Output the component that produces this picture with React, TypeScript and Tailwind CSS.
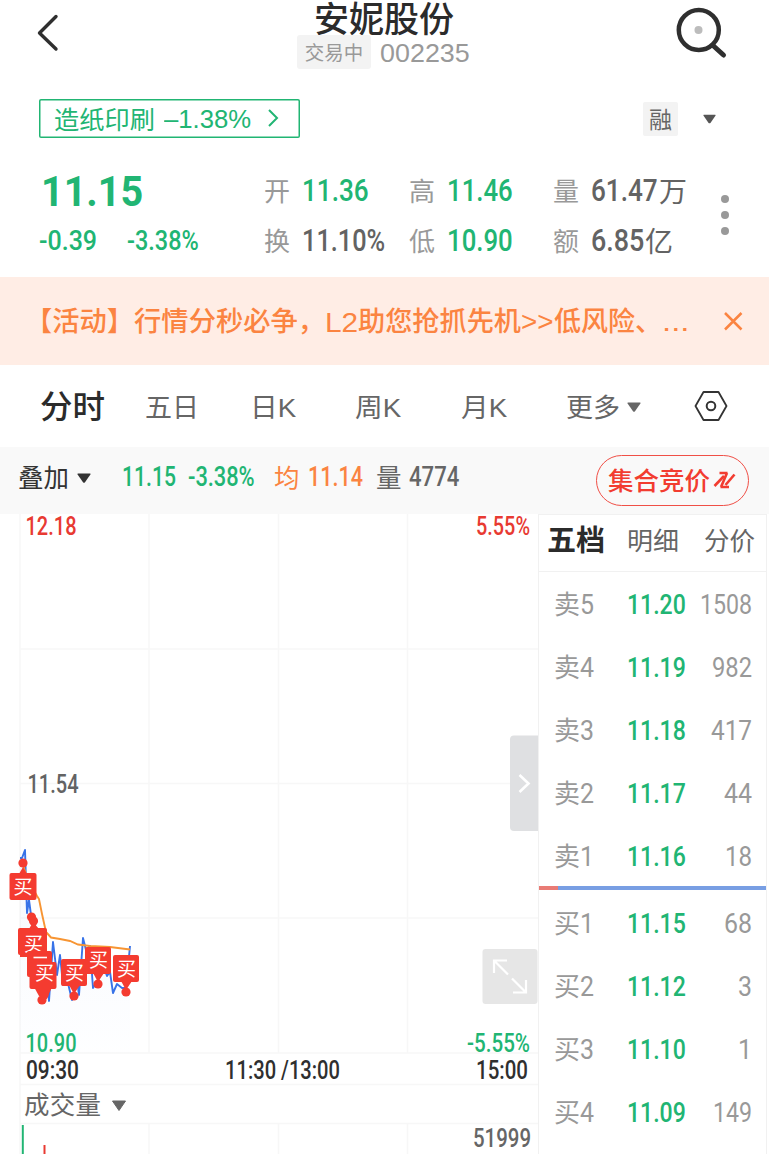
import { useLayoutEffect, useRef, useState } from "react";
import type { ReactNode } from "react";

const CJK = "font-['Noto_Sans_CJK_SC',sans-serif]";
const NUM = "font-['Roboto','Noto_Sans_CJK_SC',sans-serif]";
const SANS = "font-['Liberation_Sans','Noto_Sans_CJK_SC',sans-serif]";

/** Text condensed or stretched horizontally to occupy exactly `w` pixels. */
function Fit({ w, className = "", children }: { w: number; className?: string; children: ReactNode }) {
  const ref = useRef<HTMLSpanElement>(null);
  const [scale, setScale] = useState(1);
  useLayoutEffect(() => {
    if (ref.current) setScale(w / ref.current.offsetWidth);
  }, [w]);
  return (
    <span className={`flex shrink-0 items-center whitespace-nowrap leading-none ${className}`} style={{ width: w }}>
      <span ref={ref} className="block shrink-0 origin-left" style={{ transform: `scaleX(${scale})` }}>
        {children}
      </span>
    </span>
  );
}

function Caret({ className = "" }: { className?: string }) {
  return (
    <svg viewBox="0 0 14 10" className={`shrink-0 ${className}`} fill="currentColor">
      <path d="M1 0.5H13Q14 .7 13.4 1.6L8 9.2Q7 10.2 6 9.2L.6 1.6Q0 .7 1 .5Z" />
    </svg>
  );
}

function Header() {
  return (
    <header className="flex h-[85px] items-start">
      <svg className="ml-[34px] mt-[12px] h-[42px] w-[30px]" viewBox="0 0 30 42" fill="none" stroke="#2f2f2f" strokeWidth="3.4" strokeLinecap="round" strokeLinejoin="round">
        <path d="M22 4.5 5.5 21 22 37" />
      </svg>
      <div className="ml-[233px] flex w-[173px] flex-col">
        <h1 className={`ml-[17px] h-[35px] whitespace-nowrap text-[35px] font-medium leading-[33px] text-[#2b2b2b] ${CJK}`}>安妮股份</h1>
        <div className="flex h-[34px] items-center">
          <span className={`flex h-[34px] w-[74px] items-center justify-center rounded-[3px] bg-[#f3f3f3] text-[19.5px] leading-none text-[#999] ${CJK}`}>交易中</span>
          <Fit w={90} className={`ml-[9px] pt-[2px] text-[26px] text-[#999] ${SANS}`}>002235</Fit>
        </div>
      </div>
      <svg className="ml-[202px] mt-[5px] h-[56px] w-[56px]" viewBox="0 0 56 56" fill="none" stroke="#2f2f2f">
        <circle cx="26.800" cy="25" r="20" strokeWidth="4.500" />
        <path d="M41 40.500 51.500 50" strokeWidth="5" strokeLinecap="round" />
        <circle cx="26.500" cy="25" r="4" fill="#bcbcbc" stroke="none" />
      </svg>
    </header>
  );
}

function SectorRow() {
  return (
    <div className="flex h-[68px] items-center">
      <div className="-mt-0.5 ml-[39px] flex h-[39px] w-[261px] items-center rounded-[2px] bg-white text-[#21b573] ring-[1.5px] ring-inset ring-[#21b573]">
        <Fit w={101} className={`ml-[15px] text-[25px] ${CJK}`}>造纸印刷</Fit>
        <Fit w={87} className={`ml-[9px] mt-0.5 text-[26px] ${SANS}`}>–1.38%</Fit>
        <svg className="ml-[16px] h-[20px] w-[12px]" viewBox="0 0 12 20" fill="none" stroke="currentColor" strokeWidth="2">
          <path d="M2 2 10 10 2 18" />
        </svg>
      </div>
      <span className={`ml-[343px] flex h-[34px] w-[35px] items-center justify-center rounded-[2px] bg-[#f3f3f3] pb-[2px] text-[23px] leading-none text-[#666] ${CJK}`}>融</span>
      <Caret className="ml-[25px] h-[10px] w-[13px] text-[#555]" />
    </div>
  );
}

function Stat({ label, value, unit, w, green }: { label: string; value: string; unit?: string; w: number; green?: boolean }) {
  return (
    <div className="flex h-[50px] items-center">
      <span className={`w-[38px] pb-[3px] text-[26px] leading-none text-[#999] ${CJK}`}>{label}</span>
      <Fit w={w} className={`pb-[2px] text-[32px] font-medium ${NUM} ${green ? "text-[#21b573]" : "text-[#636363]"}`}>{value}</Fit>
      {unit && <span className={`ml-px pb-[3px] text-[28px] leading-none text-[#636363] ${CJK}`}>{unit}</span>}
    </div>
  );
}

function Quote() {
  return (
    <section className="flex h-[124px] pt-[13px]">
      <div className="ml-[39px] w-[225px] text-[#21b573]">
        <div className="flex h-[50px] items-center">
          <Fit w={102} className={`ml-[2px] text-[43px] font-bold ${NUM}`}>11.15</Fit>
        </div>
        <div className="flex h-[50px] items-center">
          <Fit w={58} className={`text-[28px] font-medium ${NUM}`}>-0.39</Fit>
          <Fit w={72} className={`ml-[30px] text-[28px] font-medium ${NUM}`}>-3.38%</Fit>
        </div>
      </div>
      <div className="w-[145px]">
        <Stat label="开" value="11.36" w={67} green />
        <Stat label="换" value="11.10%" w={83} />
      </div>
      <div className="w-[144px]">
        <Stat label="高" value="11.46" w={66} green />
        <Stat label="低" value="10.90" w={66} green />
      </div>
      <div className="w-[168px]">
        <Stat label="量" value="61.47" unit="万" w={67} />
        <Stat label="额" value="6.85" unit="亿" w={53} />
      </div>
      <div className="flex h-[100px] flex-col justify-center gap-[8px] pb-[3px]">
        <i className="size-2 rounded-full bg-[#999]" />
        <i className="size-2 rounded-full bg-[#999]" />
        <i className="size-2 rounded-full bg-[#999]" />
      </div>
    </section>
  );
}

function Banner() {
  return (
    <div className="flex h-[88px] items-center bg-[#ffede5] text-[#fb8441]">
      <div className={`ml-[25px] flex w-[666px] pt-[3px] text-[27px] font-medium ${SANS}`}>
        <Fit w={300}>【活动】行情分秒必争，</Fit>
        <Fit w={33} className="text-[28px]">L2</Fit>
        <Fit w={163}>助您抢抓先机</Fit>
        <Fit w={33}>&gt;&gt;</Fit>
        <Fit w={108}>低风险、</Fit>
        <Fit w={28}>...</Fit>
      </div>
      <svg className="ml-[32px] size-[20px]" viewBox="0 0 20 20" fill="none" stroke="currentColor" strokeWidth="2.500">
        <path d="M2 2 18.500 18.500M18.500 2 2 18.500" />
      </svg>
    </div>
  );
}

function PeriodTabs() {
  return (
    <nav className={`flex h-[82px] items-center pl-[40px] text-[26.500px] text-[#666] ${SANS}`}>
      <Fit w={65} className="pt-[2px] text-[32px] font-medium text-[#2b2b2b]">分时</Fit>
      <Fit w={54} className="ml-[40px] pt-[4px]">五日</Fit>
      <Fit w={46} className="ml-[51px] pt-[4px]">日K</Fit>
      <Fit w={46} className="ml-[59px] pt-[4px]">周K</Fit>
      <Fit w={46} className="ml-[60px] pt-[4px]">月K</Fit>
      <Fit w={54} className="ml-[59px] pt-[4px]">更多</Fit>
      <Caret className="ml-[7px] mt-0.5 h-[10px] w-[14px]" />
      <svg className="ml-[53px] h-[32px] w-[34px]" viewBox="0 0 34 32" fill="none" stroke="#333" strokeLinejoin="round">
        <path d="M9.500 2H24.500L32.500 16 24.500 30H9.500L1.500 16Z" strokeWidth="1.800" />
        <circle cx="17" cy="16" r="4.300" strokeWidth="2" />
      </svg>
    </nav>
  );
}

function InfoBar() {
  return (
    <div className={`flex h-[67px] items-start bg-[#f9f9f9] pl-[18px] text-[25.500px] font-medium ${NUM}`}>
      <div className="flex h-[60px] items-center">
        <Fit w={51} className={`pb-[3px] font-normal text-[#333] ${CJK}`}>叠加</Fit>
        <Caret className="ml-[8px] mt-0.5 h-[10px] w-[14px] text-[#333]" />
        <Fit w={54} className="ml-[31px] text-[27px] text-[#21b573]">11.15</Fit>
        <Fit w={67} className="ml-[12px] text-[27px] text-[#21b573]">-3.38%</Fit>
        <Fit w={26} className={`ml-[19px] pb-[3px] font-normal text-[#fb8441] ${CJK}`}>均</Fit>
        <Fit w={55} className="ml-[8px] text-[27px] text-[#fb8441]">11.14</Fit>
        <Fit w={26} className={`ml-[13px] pb-[3px] font-normal text-[#666] ${CJK}`}>量</Fit>
        <Fit w={50} className="ml-[7px] text-[27px] text-[#666]">4774</Fit>
      </div>
      <button className="ml-[137px] mt-[8px] flex h-[51px] w-[153px] items-center rounded-full border-[1.500px] border-[#f04f46] pl-[11px] text-[#f23c30]">
        <Fit w={102} className={`pb-[2px] text-[25px] font-medium ${CJK}`}>集合竞价</Fit>
        <svg className="-mt-0.5 ml-[3px] h-[20px] w-[24px]" viewBox="0 0 24 20" fill="none" stroke="currentColor" strokeWidth="2.600">
          <path d="M1.500 16 11 6" />
          <path d="M6.500 3H14.500M14 3 8 17M7.500 17H16" />
          <path d="M12.500 15 21.500 4.500" />
        </svg>
      </button>
    </div>
  );
}

function Label({ x, y, w, fill, children, size = 25 }: { x: number; y: number; w: number; fill: string; children: string; size?: number }) {
  return (
    <text x={x} y={y} textLength={w} lengthAdjust="spacingAndGlyphs" fill={fill} fontSize={size} className={`font-medium ${NUM}`}>
      {children}
    </text>
  );
}

type Trade = { x: number; y: number; w: number; tx: number; ty: number; dots: [number, number][]; tip: string };

const trades: Trade[] = [
  { x: 9.5, y: 873, w: 27, tx: 13.5, ty: 894, dots: [[23, 863]], tip: "M23 867 27 874H19Z" },
  { x: 18, y: 928, w: 29, tx: 24, ty: 951, dots: [[31.5, 917], [33.5, 921]], tip: "M33 922 39 929H29ZM20 954h9v3h-9Z" },
];

const stacked: Trade[] = [
  { x: 29.5, y: 962, w: 27, tx: 35, ty: 980, dots: [[42, 1000], [44, 995]], tip: "M34 987h18l-4 9h-9Z" },
  { x: 61, y: 959, w: 26, tx: 65, ty: 980, dots: [[74, 996]], tip: "M69 985H80L74 994Z" },
  { x: 85, y: 947, w: 26, tx: 89, ty: 967, dots: [[98, 984]], tip: "M93 973H104L98 982Z" },
  { x: 113, y: 955, w: 26, tx: 117, ty: 976, dots: [[126, 992]], tip: "M121 981H132L126 990Z" },
];

function Marker({ t }: { t: Trade }) {
  return (
    <g fill="#f43b30">
      {t.dots.map(([cx, cy]) => (
        <circle key={cx} cx={cx} cy={cy} r="4.600" />
      ))}
      <path d={t.tip} />
      <rect x={t.x} y={t.y} width={t.w} height="27" rx="2" />
      <text x={t.tx} y={t.ty} fontSize="19" fill="#fff" className={CJK}>
        买
      </text>
    </g>
  );
}

const bluePath =
  "M20 858 22 858 25 850 27 913 29 900 31 915 35 925 40 960 47 980 49 1001 53 942 57 975 60 955 63 985 66 975 72 1000 77 980 79 995 83 938 86 950 90 946 93 988 98 980 104 968 107 976 110 972 113 993 117 984 122 988 126 988 130 946";

function Chart() {
  return (
    <svg className="h-[640px] w-[538px] shrink-0 overflow-visible" viewBox="0 514 538 640">
      <defs>
        <linearGradient id="area" x1="0" y1="0" x2="0" y2="1">
          <stop offset="0" stopColor="#3b7cf0" stopOpacity="0.05" />
          <stop offset="1" stopColor="#3b7cf0" stopOpacity="0.005" />
        </linearGradient>
      </defs>
      <g stroke="#f7f7f7" strokeWidth="1.500">
        <path d="M20 514V1154M149 514V1053M278.500 514V1053M407.500 514V1053M149 1123V1154M278.500 1123V1154M407.500 1123V1154" />
        <path d="M20 649H538M20 783.500H538M20 918H538M20 1053H538M20 1084.500H538M20 1123.500H538" />
      </g>
      <path d={`${bluePath} 130 1053 20 1053Z`} fill="url(#area)" />
      <path d={bluePath} fill="none" stroke="#3873e8" strokeWidth="1.900" strokeLinejoin="round" />
      <path d="M22 862 28 880 37 896 39 899 42 914 46 932 51 937.500 60 939 70 941 78 944.500 90 946 110 947 130 949.500" fill="none" stroke="#f79533" strokeWidth="1.900" />
      {trades.map((t) => (
        <Marker key={t.x} t={t} />
      ))}
      <rect x="27" y="951" width="25" height="26" rx="2" fill="#f43b30" />
      <path d="M33.500 957.500H47" stroke="#fff" strokeWidth="1.600" />
      {stacked.map((t) => (
        <Marker key={t.x} t={t} />
      ))}

      <Label x={25.5} y={535} w={51} fill="#e83a32">12.18</Label>
      <Label x={476} y={535} w={54} fill="#e83a32">5.55%</Label>
      <Label x={27.5} y={793} w={51} fill="#636363">11.54</Label>
      <Label x={25.5} y={1051.5} w={51} fill="#21b573">10.90</Label>
      <Label x={467} y={1051.5} w={63} fill="#21b573">-5.55%</Label>
      <Label x={26} y={1078.5} w={53} fill="#2f2f2f">09:30</Label>
      <Label x={225} y={1078.5} w={115} fill="#2f2f2f">11:30 /13:00</Label>
      <Label x={476} y={1078.5} w={52} fill="#2f2f2f">15:00</Label>
      <text x="24" y="1114" fontSize="25.500" textLength="77" fill="#666" className={CJK}>成交量</text>
      <path d="M112.500 1101H125.500L119 1110.500Z" fill="#666" stroke="#666" strokeLinejoin="round" />
      <Label x={473} y={1146.5} w={58} fill="#666">51999</Label>
      <path d="M22.800 1125V1154" stroke="#21b573" strokeWidth="2" />
      <path d="M44.500 1145V1154" stroke="#e83a32" strokeWidth="2" />

      <path d="M538 735.500H514Q510 735.500 510 739.500V827Q510 831 514 831H538Z" fill="#dfe0e2" />
      <path d="M519.500 775 528.500 783.500 519.500 792" fill="none" stroke="#fff" strokeWidth="2.600" />
      <rect x="482.500" y="949" width="55" height="55" rx="3" fill="#e6e6e6" />
      <path d="M494 973V960.500H507M494.500 961 508 974.500M526 980V992.500H513M525.500 992 512 978.500" fill="none" stroke="#fff" strokeWidth="2.200" />
    </svg>
  );
}

function Level({ label, price, qty, qw }: { label: string; price: string; qty: string; qw: number }) {
  return (
    <div className={`flex h-[63px] items-center pl-[15px] pr-[14px] pt-[3px] text-[28.500px] ${NUM}`}>
      <span className={`pb-[5px] text-[26px] leading-none text-[#999] ${CJK}`}>{label[0]}</span>
      <Fit w={14} className="text-[#999]">{label[1]}</Fit>
      <Fit w={59} className="ml-[33px] font-medium text-[#21b573]">{price}</Fit>
      <Fit w={qw} className="ml-auto text-[#999]">{qty}</Fit>
    </div>
  );
}

const sells: [string, string, string, number][] = [
  ["卖5", "11.20", "1508", 52],
  ["卖4", "11.19", "982", 40],
  ["卖3", "11.18", "417", 41],
  ["卖2", "11.17", "44", 28],
  ["卖1", "11.16", "18", 27],
];
const bids: [string, string, string, number][] = [
  ["买1", "11.15", "68", 28],
  ["买2", "11.12", "3", 14],
  ["买3", "11.10", "1", 14],
  ["买4", "11.09", "149", 39],
];

function OrderBook() {
  return (
    <aside className="h-[640px] w-[229px] shrink-0 border-x-[1.500px] border-t border-[#f1f1f1]">
      <div className={`flex h-[57px] items-center border-b border-[#f1f1f1] pb-[9px] pl-[8px] text-[25.500px] text-[#666] ${CJK}`}>
        <Fit w={58} className="text-[29px] font-bold text-[#2b2b2b]">五档</Fit>
        <Fit w={52} className="ml-[22px]">明细</Fit>
        <Fit w={51} className="ml-[25px]">分价</Fit>
      </div>
      {sells.map(([l, p, q, w]) => <Level key={l} label={l} price={p} qty={q} qw={w} />)}
      <div className="-mt-px mb-px flex h-[4px]">
        <div className="w-[19px] bg-[#e97b75]" />
        <div className="flex-1 bg-[#789ee3]" />
      </div>
      {bids.map(([l, p, q, w]) => <Level key={l} label={l} price={p} qty={q} qw={w} />)}
    </aside>
  );
}

export default function App() {
  return (
    <main className="h-[1154px] w-[769px] overflow-hidden bg-white">
      <Header />
      <SectorRow />
      <Quote />
      <Banner />
      <PeriodTabs />
      <InfoBar />
      <div className="flex">
        <Chart />
        <OrderBook />
      </div>
    </main>
  );
}
